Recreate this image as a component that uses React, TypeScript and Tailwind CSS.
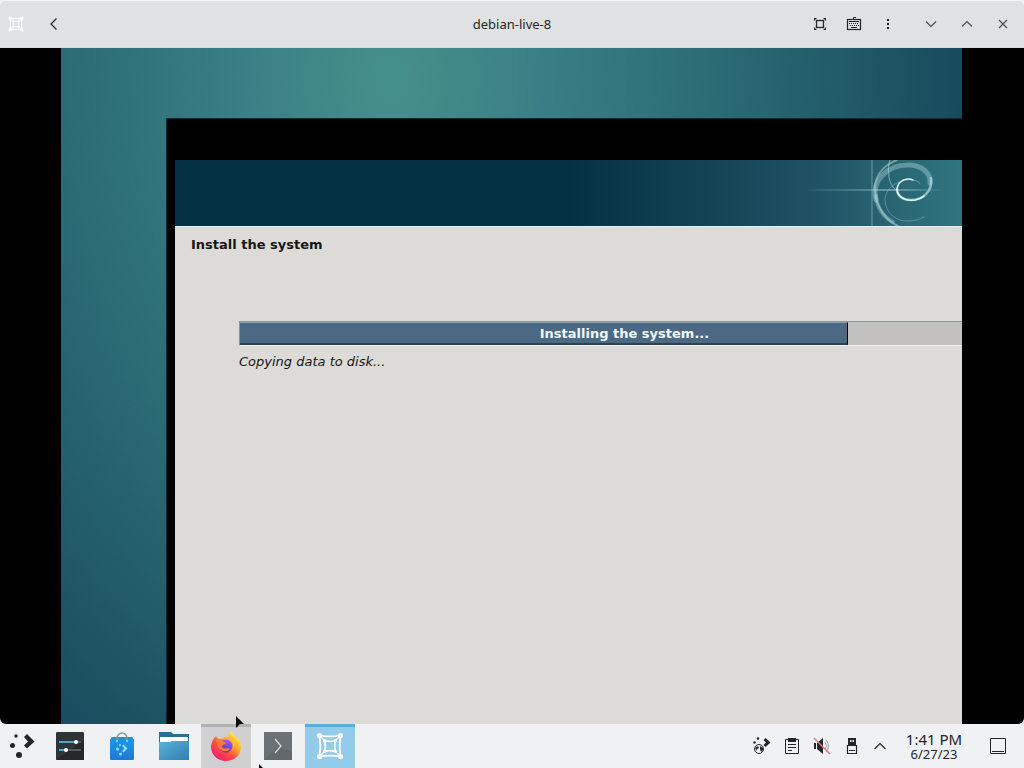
import React from 'react';

interface IconProps {
  className?: string;
}

const FrameIcon: React.FC<IconProps> = ({ className }) => (
  <svg className={className} viewBox="0 0 32 32" fill="none" stroke="currentColor" strokeWidth="2">
    <path d="M4 4Q16 6 28 4Q26 16 28 28Q16 26 4 28Q6 16 4 4Z" />
    <path d="M10 10Q16 11.500 22 10Q20.500 16 22 22Q16 20.500 10 22Q11.500 16 10 10Z" />
    <path d="M4 4l6 6M28 4l-6 6M28 28l-6-6M4 28l6-6" strokeWidth="1.500" />
    <g fill="currentColor" stroke="none">
      <circle cx="4" cy="4" r="3" />
      <circle cx="28" cy="4" r="3" />
      <circle cx="4" cy="28" r="3" />
      <circle cx="28" cy="28" r="3" />
      <circle cx="10" cy="10" r="2" />
      <circle cx="22" cy="10" r="2" />
      <circle cx="10" cy="22" r="2" />
      <circle cx="22" cy="22" r="2" />
    </g>
  </svg>
);

const Chevron: React.FC<{ d: string }> = ({ d }) => (
  <svg className="size-4" viewBox="0 0 16 16" fill="none" stroke="currentColor" strokeWidth="1.2">
    <path d={d} />
  </svg>
);

const FullscreenIcon = () => (
  <svg className="size-4" viewBox="0 0 16 16" fill="none" stroke="currentColor">
    <rect x="4.5" y="4.5" width="7" height="7" strokeWidth="1.3" />
    <path d="M2 5V2h3zM11 2h3v3zM14 11v3h-3zM5 14H2v-3z" fill="currentColor" stroke="none" />
  </svg>
);

const KeyboardIcon = () => (
  <svg className="size-4" viewBox="0 0 16 16" fill="none" stroke="currentColor">
    <rect x="1.5" y="3.5" width="13" height="10" strokeWidth="1.2" />
    <path d="M7.5 3V1.5H10" />
    <path d="M3 7.5h10M4 9.5h9" strokeDasharray="1 1" />
    <path d="M3 5.5h10M5 11.5h6" />
  </svg>
);

const DotsIcon = () => (
  <svg className="size-4" viewBox="0 0 16 16" fill="currentColor">
    <path d="M7 3h2v2H7zM7 7h2v2H7zM7 11h2v2H7z" />
  </svg>
);

const TitleBar = () => (
  <header className="flex h-12 shrink-0 items-center rounded-t-md border-t border-[#f2f3f3] border-b border-b-[#c9dcdf] bg-[#dfe1e2] px-2 text-[#232629]">
    <div className="flex flex-1 items-center gap-4">
      <FrameIcon className="size-4 text-white" />
      <button aria-label="Back" className="p-1.5">
        <Chevron d="M10.500 2.500L5 8l5.500 5.500" />
      </button>
    </div>
    <h1 className="text-[13px] leading-5">debian-live-8</h1>
    <div className="flex flex-1 items-center justify-end">
      <div className="mr-[27px] flex gap-[18px]">
        <button aria-label="Fullscreen"><FullscreenIcon /></button>
        <button aria-label="Keyboard"><KeyboardIcon /></button>
        <button aria-label="Menu"><DotsIcon /></button>
      </div>
      <div className="mr-[5px] flex gap-5 text-[#4b4e51]">
        <button aria-label="Minimize"><Chevron d="M3 5.5l5 5 5-5" /></button>
        <button aria-label="Maximize"><Chevron d="M3 10.5l5-5 5 5" /></button>
        <button aria-label="Close"><Chevron d="M4 4l8 8M12 4l-8 8" /></button>
      </div>
    </div>
  </header>
);

const Swirl = () => (
  <svg className="h-full w-[162px]" viewBox="0 0 162 66" fill="none" stroke="#b5dce0" strokeLinecap="round">
    <defs>
      <linearGradient id="ray" gradientUnits="userSpaceOnUse" x1="8" y1="0" x2="146" y2="0">
        <stop offset="0" stopColor="#b5dce0" stopOpacity="0.1" />
        <stop offset="0.65" stopColor="#b5dce0" stopOpacity="0.9" />
        <stop offset="1" stopColor="#b5dce0" stopOpacity="0" />
      </linearGradient>
    </defs>
    <rect x="8" y="29.5" width="138" height="1" fill="url(#ray)" stroke="none" />
    <path d="M72 0V66" opacity="0.25" strokeWidth="2" />
    <path d="M97 0C82 6 74 17 75 31C76 46 85 60 98 66" opacity="0.5" strokeWidth="2" />
    <path d="M76 40C71 20 88 5 108 5C122 5 131 13 130 23" opacity="0.4" strokeWidth="5" />
    <path d="M76 36C77 48 84 57 93 62" opacity="0.35" strokeWidth="4" />
    <path d="M131 18C133 31 123 40 111 40C102 40 97 35 97 29" opacity="0.7" strokeWidth="2.500" />
    <path d="M124 36C113 44 97 40 97 29C98 21 106 17 113 20" stroke="#eaf7f8" strokeWidth="1.500" />
    <path d="M113 20C116 20 119 22 120 24" opacity="0.4" />
    <path d="M90 0C87 8 89 12 89 17C90 23 92 27 96 30" opacity="0.6" />
    <path d="M108 20C92 22 85 31 85 41C86 53 96 62 109 61C115 61 120 59 124 57" opacity="0.35" />
  </svg>
);

const Installer = () => (
  <section className="ml-[105px] mt-[70px] flex flex-1 flex-col border-t border-l border-[#0c2c33] bg-black pt-[41px] pl-2">
    <div className="flex h-[66px] justify-end bg-linear-to-r from-[#053144] from-50% via-[#1f5063] via-80% to-[#30767f]">
      <Swirl />
    </div>
    <div className="flex-1 border-t border-[#e8f0ef] bg-[#dcdbd7] pt-2 pl-4 font-['DejaVu_Sans',sans-serif] text-[13px] leading-5 text-[#161616]">
      <h2 className="font-bold">Install the system</h2>
      <div className="mt-[66px] -mr-12 ml-12">
        <div
          role="progressbar"
          aria-label="Installing the system"
          aria-valuenow={79}
          className="grid h-[25px] border border-[#8b9495] border-b-[#f0f0ed] bg-[#c2c1bd]"
        >
          <div className="col-start-1 row-start-1 w-[79%] border-t border-r border-b-2 border-t-[#91a4b0] border-r-black border-b-[#2e4352] bg-[#4b6983]" />
          <span className="col-start-1 row-start-1 self-center text-center font-bold text-[#f0f8fb]">Installing the system...</span>
        </div>
        <p className="mt-1.5 italic">Copying data to disk...</p>
      </div>
    </div>
  </section>
);

const LauncherIcon = () => (
  <svg className="size-7" viewBox="0 0 28 28" fill="#232629">
    <circle cx="8" cy="4" r="1.700" />
    <circle cx="4.500" cy="13.500" r="2.500" />
    <circle cx="11" cy="23" r="3" />
    <path d="M16 5l3-3 7.500 7.500-7.500 7-3-3 4-4z" />
  </svg>
);

const SettingsIcon = () => (
  <svg className="size-7" viewBox="0 0 28 28">
    <rect width="28" height="28" rx="1" fill="#2f3437" />
    <path d="M0 28L28 8V28Z" fill="#26292b" />
    <path d="M3 10h22M3 18h22" stroke="#646b6f" strokeWidth="1.5" />
    <path d="M3 10h17M3 18h7" stroke="#52bce0" strokeWidth="1.5" />
    <circle cx="20" cy="10" r="2" fill="#fff" />
    <circle cx="10" cy="18" r="2" fill="#fff" />
  </svg>
);

const StoreIcon = () => (
  <svg className="size-7" viewBox="0 0 28 28">
    <defs>
      <linearGradient id="bag" x1="0" y1="0" x2="0" y2="1">
        <stop offset="0" stopColor="#1c9be8" />
        <stop offset="1" stopColor="#1f78d8" />
      </linearGradient>
    </defs>
    <path d="M2 8l2-3h20l2 3v19q0 1-1 1H3q-1 0-1-1z" fill="url(#bag)" />
    <path d="M4 5h20l2 3H2z" fill="#2d8fc8" />
    <path d="M9 9V6a5 5 0 0 1 10 0v3" fill="none" stroke="#849aa5" strokeWidth="1.500" />
    <g fill="#8de2fa">
      <circle cx="9" cy="9" r="1" />
      <circle cx="19" cy="9" r="1" />
      <circle cx="12" cy="13" r="1" />
      <circle cx="9.500" cy="17" r="1.500" />
      <circle cx="12.500" cy="22" r="1.500" />
      <path d="M14 14l1.500-1.500 4 4-4 4L14 19l2.500-2.500z" />
    </g>
  </svg>
);

const FolderIcon = () => (
  <svg className="h-7 w-[30px]" viewBox="0 0 30 28">
    <defs>
      <linearGradient id="folder" x1="0" y1="0" x2="1" y2="1">
        <stop offset="0" stopColor="#5bb1dc" />
        <stop offset="1" stopColor="#327fae" />
      </linearGradient>
    </defs>
    <path d="M0 0h12l2 2h16v12H0z" fill="#2a6f93" />
    <path d="M1 5h28v8H1z" fill="#fff" />
    <path d="M0 10h11l2-1h17v19H0z" fill="url(#folder)" />
  </svg>
);

const FirefoxIcon = () => (
  <svg className="size-[30px]" viewBox="0 0 30 30">
    <defs>
      <linearGradient id="flame" x1="0.85" y1="0.1" x2="0.2" y2="0.9">
        <stop offset="0" stopColor="#fff04a" />
        <stop offset="0.35" stopColor="#ffa92c" />
        <stop offset="0.65" stopColor="#ff4d42" />
        <stop offset="1" stopColor="#f5206d" />
      </linearGradient>
      <linearGradient id="globe" x1="0.7" y1="0" x2="0.4" y2="1">
        <stop offset="0" stopColor="#a957ef" />
        <stop offset="1" stopColor="#4b3bb8" />
      </linearGradient>
    </defs>
    <path d="M2 9C3 7 4 6 5 5L7 8H10C13 6 16 5 17 6C17 3 19 1 21 0C21 4 24 5 26 8V6C29 9 30 13 30 17C29 25 23 30 15 30C7 30 0 24 0 16C0 13 1 11 2 9Z" fill="url(#flame)" />
    <circle cx="15" cy="15" r="6.500" fill="url(#globe)" />
    <path d="M5 8C8 7 10 8 11 10L15 11.500C15 13 13 13.500 11 14.500C10 16 12 18 15 17.500C17 17 18 17 19 18C17 20.500 14 21 11 19.500C8 18 5 14 5 8Z" fill="#ff7a30" />
    <path d="M14 7C19 6 23 10 22 16L24 14C25 10 22 6 18 5Z" fill="#ffbf30" />
  </svg>
);

const TerminalIcon = () => (
  <svg className="size-7" viewBox="0 0 28 28">
    <rect width="28" height="28" fill="#6b7174" />
    <path d="M0 28L14 14 28 20V28Z" fill="#62696c" />
    <path d="M11 7l6 7-6 7" fill="none" stroke="#dde0e1" strokeWidth="1.2" />
  </svg>
);

const tasks = [
  { label: 'Application Launcher', icon: <LauncherIcon />, style: 'w-11' },
  { label: 'System Settings', icon: <SettingsIcon />, style: 'w-[52px]' },
  { label: 'Discover', icon: <StoreIcon />, style: 'w-[52px]' },
  { label: 'Files', icon: <FolderIcon />, style: 'w-[52px]' },
  { label: 'Firefox', icon: <FirefoxIcon />, style: 'w-[50px] ml-px bg-[#d0d0d1] shadow-[inset_0_3px_#b0b1b2]' },
  { label: 'Terminal', icon: <TerminalIcon />, style: 'w-[54px]' },
  { label: 'Boxes', icon: <FrameIcon className="size-7 text-white" />, style: 'w-[50px] bg-[#93cbeb] shadow-[inset_0_3px_#5eafd7]' },
];

const UpdateIcon = () => (
  <svg className="size-[18px]" viewBox="0 0 18 18" fill="#232629">
    <circle cx="5" cy="1.500" r="1.200" />
    <circle cx="1.500" cy="5.500" r="1.200" />
    <path d="M10.500 3l2-2L17.500 5.500l-5 4.500-2-2L13 5.500z" />
    <circle cx="6" cy="12" r="4.500" fill="none" stroke="#232629" />
    <path d="M2 11l3-2 1 2-2 1v2zM7 9l3 2v2l-2 2-1-3z" />
  </svg>
);

const ClipboardIcon = () => (
  <svg className="size-[18px]" viewBox="0 0 18 18" fill="none" stroke="#232629">
    <path d="M2.500 2.500h13v14h-13z" />
    <path d="M5 1h8v4H5z" fill="#232629" stroke="none" />
    <path d="M5 7.500h8M5 10.500h8M5 13.500h4" />
  </svg>
);

const MutedIcon = () => (
  <svg className="size-[18px]" viewBox="0 0 18 18" fill="none">
    <path d="M1 6h2v6H1zM4 6l6-5v16l-6-5z" fill="#232629" />
    <path d="M12 5q3 4 0 8M13 3q5 6 0 12" stroke="#a4aaab" />
    <path d="M1 1l16 16" stroke="#e47b86" strokeWidth="1.500" />
  </svg>
);

const UsbIcon = () => (
  <svg className="size-[18px]" viewBox="0 0 18 18">
    <path d="M5 1h8v8H5z" fill="#232629" />
    <path d="M7 3h1.500v2H7zM9.500 3H11v2H9.500z" fill="#eff0f1" />
    <path d="M4.500 8.500h9v8h-9z" fill="none" stroke="#232629" strokeWidth="1.200" />
    <path d="M6 13.500h6" stroke="#232629" />
  </svg>
);

const tray = [
  { label: 'Updates', icon: <UpdateIcon /> },
  { label: 'Clipboard', icon: <ClipboardIcon /> },
  { label: 'Volume muted', icon: <MutedIcon /> },
  { label: 'Removable devices', icon: <UsbIcon /> },
];

const Taskbar = () => (
  <footer className="flex h-11 shrink-0 items-stretch bg-[#eff1f3] text-[#232629]">
    <nav className="flex">
      {tasks.map((task) => (
        <button key={task.label} aria-label={task.label} className={`flex items-center justify-center ${task.style}`}>
          {task.icon}
        </button>
      ))}
    </nav>
    <div className="ml-auto flex items-center">
      <div className="flex gap-3">
        {tray.map((item) => (
          <button key={item.label} aria-label={item.label}>{item.icon}</button>
        ))}
      </div>
      <button aria-label="Show hidden icons" className="ml-[11px]">
        <Chevron d="M2.500 11L8 5.500l5.500 5.500" />
      </button>
      <time className="ml-4 flex w-[60px] flex-col text-center whitespace-nowrap">
        <span className="text-[15px] leading-4">1:41 PM</span>
        <span className="text-[13px] leading-[14px]">6/27/23</span>
      </time>
      <button aria-label="Show desktop" className="mr-[18px] ml-[26px]">
        <svg className="size-4" viewBox="0 0 16 16" fill="none" stroke="currentColor">
          <path d="M.5 .5h15v15H.5zM2 13.500h12" />
        </svg>
      </button>
    </div>
  </footer>
);

const Pointer: React.FC<IconProps> = ({ className }) => (
  <svg className={className} viewBox="0 0 8 12" fill="#000">
    <path d="M0 0l8 8H4l-4 4z" />
  </svg>
);

const App: React.FC = () => {
  return (
    <div className="relative flex min-h-screen flex-col overflow-hidden bg-[#eff1f3] font-['Noto_Sans',sans-serif]">
      <TitleBar />
      <main className="flex flex-1 overflow-hidden rounded-b-md bg-black pr-[62px] pl-[61px]">
        <div className="flex min-w-0 flex-1 overflow-hidden bg-[radial-gradient(ellipse_600px_860px_at_330px_30px,#46908b_0%,#3a7f85_25%,#2b6b74_55%,#205867_78%,#15465a_100%)]">
          <Installer />
        </div>
      </main>
      <Taskbar />
      <Pointer className="absolute bottom-10 left-[236px] h-3 w-2" />
      <Pointer className="absolute -bottom-2 left-[259px] h-3 w-2" />
    </div>
  );
};

export default App;
